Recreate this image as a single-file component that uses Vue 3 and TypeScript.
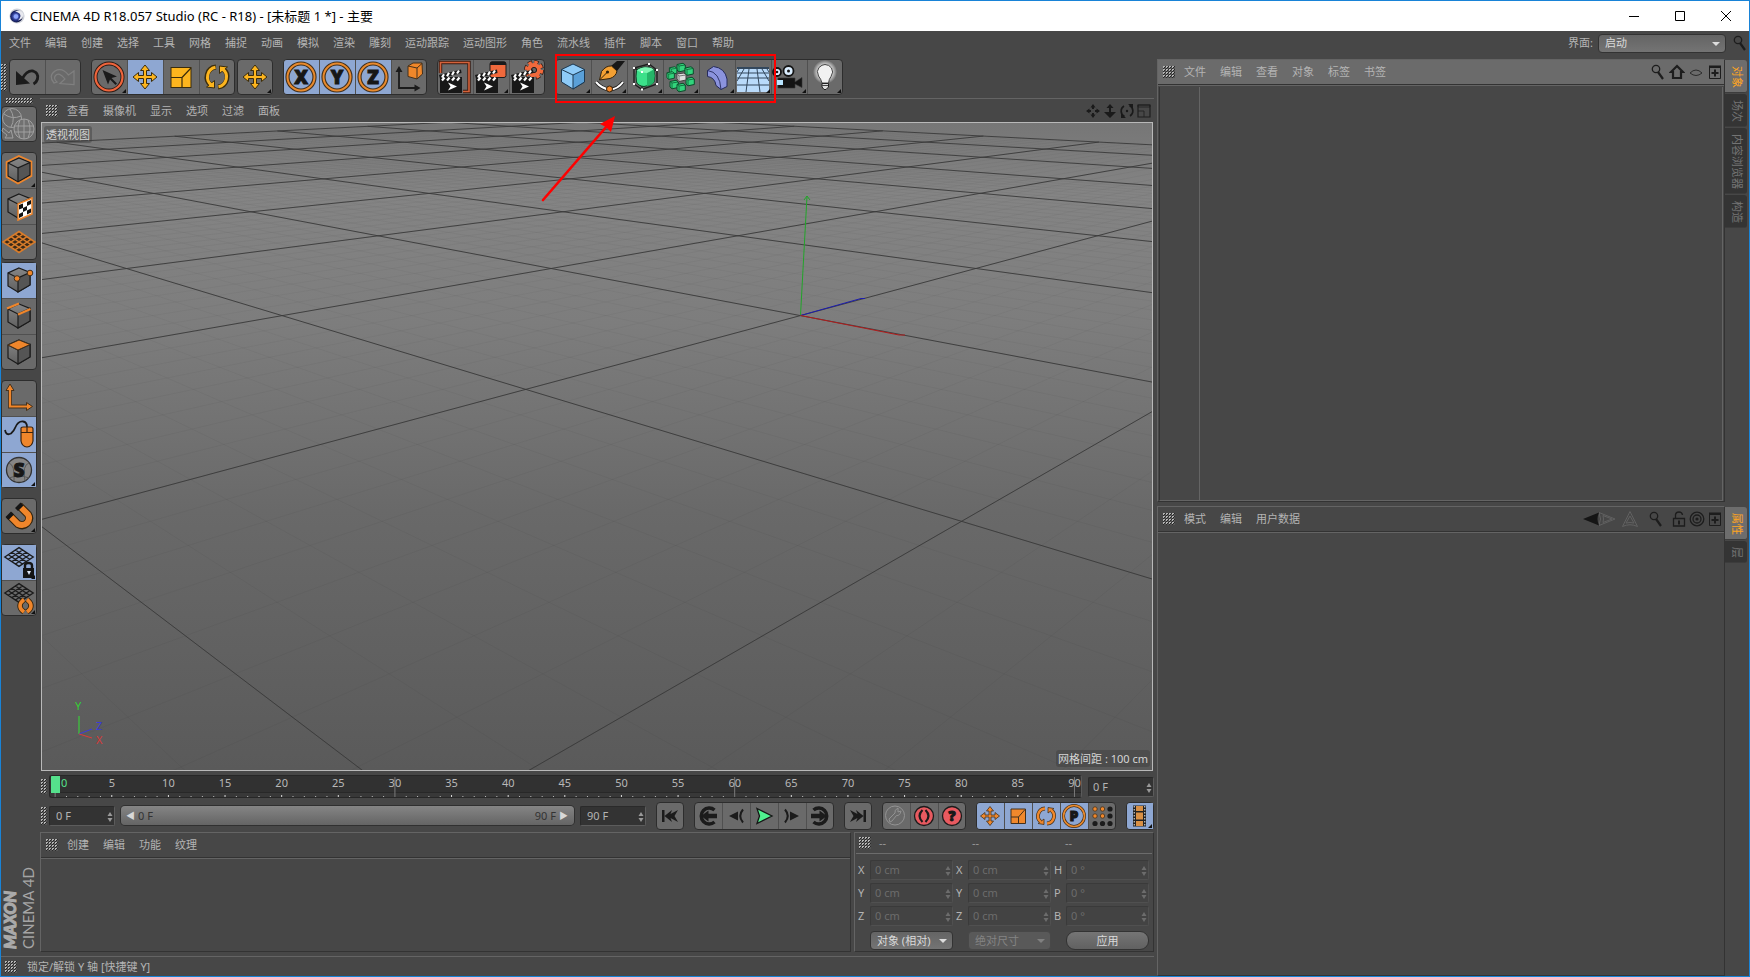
<script setup lang="ts">
import { ref } from 'vue'

interface Tool { icon: string; label: string; on?: boolean; more?: boolean; off?: boolean; glyph?: string }
interface Segment { x1: number; y1: number; x2: number; y2: number }

const mainMenu = ['文件', '编辑', '创建', '选择', '工具', '网格', '捕捉', '动画', '模拟', '渲染', '雕刻', '运动跟踪', '运动图形', '角色', '流水线', '插件', '脚本', '窗口', '帮助']
const viewMenu = ['查看', '摄像机', '显示', '选项', '过滤', '面板']
const materialMenu = ['创建', '编辑', '功能', '纹理']
const objectMenu = ['文件', '编辑', '查看', '对象', '标签', '书签']
const attributeMenu = ['模式', '编辑', '用户数据']

const toolGroups: Tool[][] = [
  [{ icon: 'undo', label: '撤销' }, { icon: 'redo', label: '重做', off: true }],
  [
    { icon: 'cursor', label: '实时选择', more: true },
    { icon: 'move', label: '移动', on: true },
    { icon: 'scale', label: '缩放' },
    { icon: 'rotate', label: '旋转' },
  ],
  [{ icon: 'move', label: '最近使用的工具', more: true }],
  [
    { icon: 'ring', label: 'X 轴', on: true, glyph: 'X' },
    { icon: 'ring', label: 'Y 轴', on: true, glyph: 'Y' },
    { icon: 'ring', label: 'Z 轴', on: true, glyph: 'Z' },
    { icon: 'coords', label: '坐标系统' },
  ],
  [
    { icon: 'render-view', label: '渲染活动视图' },
    { icon: 'render-picture', label: '渲染到图片查看器', more: true },
    { icon: 'render-settings', label: '编辑渲染设置' },
  ],
]
const createTools: Tool[] = [
  { icon: 'cube-blue', label: '立方体', more: true },
  { icon: 'pen', label: '画笔', more: true },
  { icon: 'subdivision', label: '细分曲面', more: true },
  { icon: 'array', label: '阵列', more: true },
  { icon: 'bend', label: '扭曲', more: true },
  { icon: 'floor', label: '地面', more: true },
  { icon: 'camera', label: '摄像机', more: true },
  { icon: 'light', label: '灯光', more: true },
]
const palette: Tool[][] = [
  [{ icon: 'editable', label: '转为可编辑对象', off: true }],
  [
    { icon: 'model', label: '模型', more: true },
    { icon: 'texture', label: '纹理' },
    { icon: 'workplane', label: '工作平面' },
  ],
  [
    { icon: 'points', label: '点', on: true },
    { icon: 'edges', label: '边' },
    { icon: 'polygons', label: '多边形' },
  ],
  [
    { icon: 'axis', label: '启用轴心' },
    { icon: 'tweak', label: '微调', on: true },
    { icon: 'solo', label: '视窗单体独显', on: true, more: true, glyph: 'S' },
  ],
  [{ icon: 'magnet', label: '启用捕捉', more: true }],
  [
    { icon: 'plane-lock', label: '锁定工作平面', on: true, more: true },
    { icon: 'plane-rotate', label: '平直工作平面', more: true },
  ],
]
const playGroups: Tool[][] = [
  [{ icon: 'to-start', label: '转到开始' }],
  [
    { icon: 'prev-key', label: '上一关键帧' },
    { icon: 'prev-frame', label: '上一帧' },
    { icon: 'play', label: '向前播放' },
    { icon: 'next-frame', label: '下一帧' },
    { icon: 'next-key', label: '下一关键帧' },
  ],
  [{ icon: 'to-end', label: '转到结束' }],
  [
    { icon: 'record', label: '记录活动对象', off: true },
    { icon: 'autokey', label: '自动关键帧' },
    { icon: 'keysel', label: '关键帧选集', glyph: '?' },
  ],
  [
    { icon: 'k-move', label: '位置', on: true },
    { icon: 'k-scale', label: '缩放', on: true },
    { icon: 'k-rotate', label: '旋转', on: true },
    { icon: 'k-param', label: '参数', on: true, glyph: 'P' },
    { icon: 'k-points', label: '点级别动画' },
  ],
  [{ icon: 'film', label: '动画预置', on: true, more: true }],
]

const startFrame = ref('0 F')
const endFrame = ref('90 F')
const currentFrame = ref('0 F')
const layout = ref('启动')
const coordMode = ref('对象 (相对)')
const sizeMode = ref('绝对尺寸')

const coordRows = [
  [['X', '0 cm'], ['X', '0 cm'], ['H', '0 °']],
  [['Y', '0 cm'], ['Y', '0 cm'], ['P', '0 °']],
  [['Z', '0 cm'], ['Z', '0 cm'], ['B', '0 °']],
]

const frames = Array.from({ length: 91 }, (_, f) => f)
const frameX = (f: number): string => `${(0.5 + f * 1.0985).toFixed(3)}%`

// Perspective projection of the ground plane onto the viewport.
const depth = (x: number, z: number): number => 1 - 0.2206 * x + 0.2203 * z
function project(x: number, z: number): [number, number] {
  const w = depth(x, z)
  return [(127.7 * x + 390.5 * z + 800.4) / w, (-12.13 * x + 12 * z + 315.6) / w]
}
function groundLine(axis: 'x' | 'z', at: number): Segment | null {
  const near = 0.04
  let from = axis === 'x' ? -10 : -8
  let to = axis === 'x' ? 7 : 12
  if (axis === 'x') from = Math.max(from, (near - 1 + 0.2206 * at) / 0.2203)
  else to = Math.min(to, (1 + 0.2203 * at - near) / 0.2206)
  if (from >= to) return null
  const a = axis === 'x' ? project(at, from) : project(from, at)
  const b = axis === 'x' ? project(at, to) : project(to, at)
  return { x1: a[0], y1: a[1], x2: b[0], y2: b[1] }
}
function groundLines(step: number, xs: [number, number], zs: [number, number]): Segment[] {
  const out: Segment[] = []
  for (let i = xs[0] / step; i <= xs[1] / step; i++) {
    const s = groundLine('x', i * step)
    if (s) out.push(s)
  }
  for (let i = zs[0] / step; i <= zs[1] / step; i++) {
    const s = groundLine('z', i * step)
    if (s) out.push(s)
  }
  return out
}
const majorLines = groundLines(1, [-8, 6], [-4, 7])
const minorLines = groundLines(0.125, [-5, 3], [-3, 4])
</script>

<template>
  <div class="window">
    <svg class="defs" width="0" height="0" aria-hidden="true">
      <defs>
        <linearGradient id="g-cube" x1="0" y1="0" x2="0" y2="1"><stop offset="0" stop-color="#868686" /><stop offset="1" stop-color="#606060" /></linearGradient>
        <radialGradient id="g-logo" cx=".45" cy=".5" r=".6"><stop offset="0" stop-color="#9fb4ff" /><stop offset=".5" stop-color="#26348c" /><stop offset="1" stop-color="#05081f" /></radialGradient>
        <radialGradient id="g-glow"><stop offset=".5" stop-color="#e6e6e6" /><stop offset="1" stop-color="#fff" stop-opacity="0" /></radialGradient>
      </defs>
      <symbol id="i-logo" viewBox="0 0 18 18">
        <circle cx="9" cy="9" r="7.6" fill="#cfd2da" />
        <circle cx="8.4" cy="9.4" r="6.2" fill="url(#g-logo)" />
        <path d="M7 4.5Q13 2 15.5 7Q15.5 12 10 13.5Q14 9 11.5 6.5Q9.5 5 7 4.5Z" fill="#e8e9ef" />
        <circle cx="8" cy="9.5" r="2.2" fill="#8fa6ff" />
      </symbol>
      <symbol id="i-undo" viewBox="0 0 36 36">
        <path d="M13 20Q18 11 24 12Q30 14 28.5 20Q27.5 23.5 24.5 25" fill="none" stroke="#1c1c1c" stroke-width="2.8" />
        <path d="M7 12V26L21 24.5Z" fill="#1c1c1c" />
      </symbol>
      <symbol id="i-redo" viewBox="0 0 36 36">
        <path d="M9 24Q3 17 10 12Q17 8 23.500 16L29 12V25.5L15 24.500L20 20Q14 12.500 10.500 16.500Q8 19.500 12 23Z" fill="none" stroke="#808080" stroke-width="1.200" />
      </symbol>
      <symbol id="i-cursor" viewBox="0 0 36 36">
        <circle cx="18" cy="18" r="13.5" fill="none" stroke="#2a1a14" stroke-width="4" />
        <circle cx="18" cy="18" r="13.5" fill="none" stroke="#f0653c" stroke-width="2.2" />
        <path d="M11.5 11L26 17.5L20.5 19L26 24.5L24.5 26L19 20.5L17 25.5Z" fill="#1b1b1b" />
      </symbol>
      <symbol id="i-move" viewBox="0 0 36 36">
        <path d="M18 6L22.5 11.5H19.5V16.5H24.500V13.500L30 18L24.500 22.500V19.500H19.500V24.500H22.500L18 30L13.500 24.500H16.500V19.500H11.500V22.500L6 18L11.500 13.500V16.500H16.500V11.500H13.500Z" fill="#fdb51e" stroke="#3a2c0c" />
      </symbol>
      <symbol id="i-scale" viewBox="0 0 36 36">
        <rect x="8" y="8.5" width="20" height="20" fill="#fdb51e" stroke="#3a2c0c" />
        <path d="M8 18.5H19V28.5M19 18.5L28 9" fill="none" stroke="#3a2c0c" stroke-width="1.2" />
      </symbol>
      <symbol id="i-rotate" viewBox="0 0 36 36">
        <path d="M12 26A10 10 0 0 1 17 8M24 10A10 10 0 0 1 19 28" fill="none" stroke="#3a2c0c" stroke-width="4.8" />
        <path d="M7.5 28L15.500 29V21.500ZM28.500 8L20.500 7V14.500Z" fill="#fdb51e" stroke="#3a2c0c" />
        <path d="M12.500 26A10 10 0 0 1 16.500 8.200M23.500 10A10 10 0 0 1 19.500 27.800" fill="none" stroke="#fdb51e" stroke-width="3" />
      </symbol>
      <symbol id="i-ring" viewBox="0 0 36 36">
        <circle cx="18" cy="18" r="13.5" fill="none" stroke="#43301c" stroke-width="4.2" />
        <circle cx="18" cy="18" r="13.5" fill="none" stroke="#e98a2d" stroke-width="2" />
      </symbol>
      <symbol id="i-coords" viewBox="0 0 36 36">
        <path d="M8 11V29H25" fill="none" stroke="#1b1b1b" stroke-width="1.8" />
        <path d="M8 7L11.5 13H4.5ZM29.5 29L23.5 25.5V32.5Z" fill="#1b1b1b" />
        <path d="M17 7L22 4H31L31.5 15L26 20L17 17.5Z" fill="#f0872a" stroke="#43301c" />
        <path d="M17 7L26 9V20M26 9L31 4.5" fill="none" stroke="#43301c" />
      </symbol>
      <symbol id="i-clapper" viewBox="0 0 36 36">
        <path d="M3 21H25V34H3Z" fill="#181818" />
        <path d="M2 16L24 10.5L24.5 14L3 19.5ZM3 18H25V22H3Z" fill="#181818" />
        <path d="M5 18.5L7 15.2M10 17.2L12 13.8M15 16L17 12.5M20 14.5L22 11.5M5 21.5L7.500 18.500M10 21.500L12.500 18.500M15 21.500L17.500 18.500M20 21.500L22.500 18.500" stroke="#fff" stroke-width="2.200" />
        <path d="M11 23.500L20 27.500L11 31.500L13.500 27.500Z" fill="#fff" />
      </symbol>
      <symbol id="i-render-view" viewBox="0 0 36 36">
        <path d="M3.5 14V3.5H32V32.5H26" fill="none" stroke="#3a1b10" stroke-width="3.4" />
        <path d="M3.5 14V3.5H32V32.5H26" fill="none" stroke="#d5623a" stroke-width="1.6" />
        <use href="#i-clapper" />
      </symbol>
      <symbol id="i-render-picture" viewBox="0 0 36 36">
        <rect x="17" y="3" width="16" height="15.5" rx="2" fill="#f0693c" stroke="#1b1b1b" />
        <path d="M17 6V4.5Q17 2.5 19 2.5H31Q33 2.5 33 4.5V6Z" fill="#1b1b1b" />
        <use href="#i-clapper" />
      </symbol>
      <symbol id="i-render-settings" viewBox="0 0 36 36">
        <circle cx="25" cy="11" r="7.5" fill="none" stroke="#2a1a14" stroke-width="5" stroke-dasharray="3.9 2" />
        <circle cx="25" cy="11" r="7" fill="none" stroke="#f0693c" stroke-width="4.5" stroke-dasharray="3.2 2.3" />
        <circle cx="25" cy="11" r="4.9" fill="none" stroke="#f0693c" stroke-width="4.2" />
        <circle cx="25" cy="11" r="2.6" fill="#666" stroke="#2a1a14" />
        <use href="#i-clapper" />
      </symbol>
      <symbol id="i-cube-blue" viewBox="0 0 36 36">
        <path d="M18 5L29.5 10.5V23L18 30L6.5 23V10.5Z" fill="#8ecbf8" stroke="#1c3850" />
        <path d="M29.5 10.5V23L18 30V16Z" fill="#5aa0d8" stroke="#1c3850" />
        <path d="M6.5 10.5L18 16" stroke="#1c3850" />
      </symbol>
      <symbol id="i-pen" viewBox="0 0 36 36">
        <path d="M20 7L26 2H34L26 12Z" fill="#171717" />
        <path d="M8.5 21L10.5 12.500Q15 6.500 20.500 7L26 12Q25 17.500 19 19.500Z" fill="#f3a033" stroke="#33230d" />
        <path d="M8.500 21L16 13.500" stroke="#33230d" /><circle cx="16.500" cy="13" r="1.600" fill="#33230d" />
        <path d="M5 23Q11 30 19 30.500Q27 30 32 23" fill="none" stroke="#222" stroke-width="3.800" />
        <path d="M5 23Q11 30 19 30.500Q27 30 32 23" fill="none" stroke="#fff" stroke-width="2" />
        <circle cx="18.500" cy="30" r="3" fill="#f3862a" stroke="#33230d" />
      </symbol>
      <symbol id="i-subdivision" viewBox="0 0 36 36">
        <path d="M7 9L22 5L30 11V25L15 30.500L7 25ZM7 9L15 13L30 11M15 13V30M22 5V9" fill="none" stroke="#1f1f1f" stroke-width="1.400" />
        <path d="M9.500 11.500Q10 9.500 17 8Q24 7.500 27 10.500Q28.500 17 27 23Q24 27 17 27.500Q11 27 9.500 23Q8.500 17 9.500 11.500Z" fill="#3be08a" stroke="#0d3e24" />
        <path d="M27 10.500Q28.500 17 27 23Q25 26 20 27V14Z" fill="#24b468" />
        <path d="M10 11.500Q12 9 18 8.200Q24 8 26.500 10.500L20 14Q14 14 10 11.500Z" fill="#7df5b2" />
        <path d="M6 8h2v2H6zM21 4h2v2h-2zM29 10h2v2h-2zM29 24h2v2h-2zM14 29.500h2v2h-2zM6 24h2v2H6zM14 12h2v2h-2z" fill="#fff" />
      </symbol>
      <symbol id="i-nub" viewBox="0 0 10 10"><path d="M1 2L7 .8L9.300 2.500V8L3 9.300L1 7.500Z" fill="#32d47c" stroke="#0c4a2a" /><path d="M1 2L3 3.500L9 2.500M3 3.500V9" fill="none" stroke="#0c5a32" stroke-width=".8" /></symbol>
      <symbol id="i-array" viewBox="0 0 36 36">
        <use href="#i-nub" x="13" y="3" width="10" height="11" /><use href="#i-nub" x="21" y="7" width="10" height="10" />
        <use href="#i-nub" x="5" y="7" width="10" height="9" /><use href="#i-nub" x="3" y="12" width="9" height="9" />
        <use href="#i-nub" x="22" y="17" width="10" height="11" /><use href="#i-nub" x="6" y="20" width="10" height="11" />
        <use href="#i-nub" x="13" y="23" width="10" height="11" />
        <path d="M14 15L21 14L23 16V21L16 22.500L14 20Z" fill="#dedede" stroke="#444" /><path d="M14 15L16 17L23 16M16 17V22" fill="none" stroke="#777" />
      </symbol>
      <symbol id="i-bend" viewBox="0 0 36 36">
        <path d="M8.500 11.500L14.500 7.500Q26 9 28 20V27.500L22 30.500L17 26.500Q16 18.500 8.500 17.500Z" fill="#8b93dd" stroke="#262b5c" />
        <path d="M8.500 11.500Q21 13 22 30.500" fill="none" stroke="#262b5c" stroke-width=".9" />
      </symbol>
      <symbol id="i-floor" viewBox="0 0 36 36">
        <path d="M2 8H34V33H2Z" fill="#b9dafa" /><path d="M2 8H34V10H2Z" fill="#33475c" />
        <path d="M2 14H34M2 19H34M2 26H34M14 10L11 33M22 10L25 33M9 10L2 22M27 10L34 22M4 10L2 13M32 10L34 13" stroke="#33475c" fill="none" />
      </symbol>
      <symbol id="i-camera" viewBox="0 0 36 36">
        <path d="M7 19H24V23L31 18.5V28.5L24 25V29H7Z" fill="#141414" stroke="#333" stroke-width=".6" />
        <circle cx="6" cy="13" r="4" fill="#dbeeff" stroke="#141414" stroke-width="1.8" /><circle cx="17.5" cy="12" r="5" fill="#dbeeff" stroke="#141414" stroke-width="1.8" />
        <circle cx="6" cy="13" r="1.3" fill="#141414" /><circle cx="17.5" cy="12" r="1.5" fill="#141414" /><rect x="6" y="21" width="6" height="5" fill="#b8e4ff" />
      </symbol>
      <symbol id="i-light" viewBox="0 0 36 36">
        <circle cx="18" cy="13" r="12" fill="url(#g-glow)" />
        <path d="M15 24Q14 20 11.5 17Q9 12 12 8.500Q15 5.500 18 5.500Q22 5.500 24.500 9Q27 13 24 17.500Q22 20 21.500 24Z" fill="#f2f2f2" stroke="#444" />
        <path d="M15 24.500H21.500V28L19 30.500H17L15 28Z" fill="#ddd" stroke="#222" /><path d="M15 26.500H21" stroke="#444" />
      </symbol>
      <symbol id="i-editable" viewBox="0 0 36 36">
        <g fill="none" stroke="#a0a0a0">
          <circle cx="11" cy="12" r="9.5" /><path d="M3 8Q11 14 20 10M9 3Q15 12 10 21" />
          <circle cx="23" cy="23" r="10" fill="#717171" /><path d="M13 20H33M13.5 26H32.5M19 14Q15 23 19 32M27 14Q31 23 27 32M23 13V33" />
          <path d="M2 22L8 27L10 24L12 32L4 32L6 29L1 25Z" fill="#6c6c6c" />
        </g>
      </symbol>
      <symbol id="i-cube" viewBox="0 0 36 36">
        <path d="M18 6L29 10.5V23L17 30L7 24V11Z" fill="url(#g-cube)" stroke="#1b1b1b" stroke-width="1.2" />
        <path d="M29 10.5V23L17 30V16Z" fill="#555" stroke="#1b1b1b" stroke-width="1.2" />
        <path d="M7 11L17 16" stroke="#1b1b1b" stroke-width="1.2" />
      </symbol>
      <symbol id="i-model" viewBox="0 0 36 36"><use href="#i-cube" /><path d="M18 4L30.5 9.5V24L17 31.5L5.5 25V10Z" fill="none" stroke="#f0862b" stroke-width="1.6" /></symbol>
      <symbol id="i-texture" viewBox="0 0 36 36">
        <use href="#i-cube" /><path d="M17 16L31 10V26L17 32Z" fill="#fff" stroke="#f0862b" stroke-width="1.5" />
        <path d="M18 17L22 15.5V20L18 21.500ZM26 14L30 12V16L26 18ZM22 20L26 18V22L22 24ZM18 26L22 24V28L18 30ZM26 22.500L30 20.500V24.500L26 26.500Z" fill="#111" />
      </symbol>
      <symbol id="i-mesh" viewBox="0 0 36 36">
        <path d="M2 18L18 7.5L34 18L18 28.5ZM6 15.4L22 25.9M10 12.7L26 23.2M14 10.1L30 20.6M6 20.6L22 10.1M10 23.2L26 12.7M14 25.9L30 15.4" fill="none" stroke-width="1.5" />
      </symbol>
      <symbol id="i-workplane" viewBox="0 0 36 36"><path d="M2 18L18 7.5L34 18L18 28.5Z" fill="#3b2a18" /><use href="#i-mesh" stroke="#d97c2a" /></symbol>
      <symbol id="i-points" viewBox="0 0 36 36"><use href="#i-cube" /><circle cx="16" cy="16.5" r="2.8" fill="#f0862b" stroke="#43301c" /><circle cx="29" cy="11" r="2.8" fill="#f0862b" stroke="#43301c" /></symbol>
      <symbol id="i-edges" viewBox="0 0 36 36"><use href="#i-cube" /><path d="M6 10.5L18 5.5M17 16.5L29.5 11" stroke="#f0862b" stroke-width="2.2" /></symbol>
      <symbol id="i-polygons" viewBox="0 0 36 36"><use href="#i-cube" /><path d="M18 6L29 10.5L17 16L7 11Z" fill="#f0862b" stroke="#43301c" /></symbol>
      <symbol id="i-axis" viewBox="0 0 36 36">
        <path d="M9 9V26.5H28" fill="none" stroke="#43301c" stroke-width="3.8" /><path d="M9 4L13 10.5H5ZM31.5 26.5L25.5 22.5V30.5Z" fill="#f0862b" stroke="#43301c" />
        <path d="M9 9V26.5H28" fill="none" stroke="#f0862b" stroke-width="2.2" />
      </symbol>
      <symbol id="i-tweak" viewBox="0 0 36 36">
        <path d="M4 14Q5 20 10 17.5Q13 15 14 12Q17 5 22 5.5Q26 6 26 11" fill="none" stroke="#1b1b1b" stroke-width="1.8" />
        <path d="M20 12Q20 11 22 11H30Q32 11 32 13V25Q31 30.5 26 31Q21 30.5 20 25Z" fill="#f0862b" stroke="#3b2410" stroke-width="1.2" /><path d="M20 16.5H32M26 11V16.5" stroke="#3b2410" stroke-width="1.2" />
      </symbol>
      <symbol id="i-solo" viewBox="0 0 36 36">
        <circle cx="18" cy="18" r="12.5" fill="#858585" stroke="#333" stroke-width="1.3" /><path d="M8 11Q14 13 13 29M28 11Q21 13 24 29M8 26Q18 22 28 26" fill="none" stroke="#5a5a5a" />
      </symbol>
      <symbol id="i-magnet" viewBox="0 0 36 36">
        <path d="M8 17L17 26Q22 29 26 25Q30 21 27 16.5L18 7.5" fill="none" stroke="#33230d" stroke-width="8" />
        <path d="M9 18L17 26Q22 28.5 26 25Q29.5 21 27 16.500L19 8.500" fill="none" stroke="#f0862b" stroke-width="6" />
        <path d="M4.500 19L10 13.500L13 16.500L7.500 22ZM14 10L19.500 4.500L22.500 7.500L17 13Z" fill="#151515" />
      </symbol>
      <symbol id="i-plane-lock" viewBox="0 0 36 36">
        <use href="#i-mesh" stroke="#1b1b1b" x="2" y="-3" width="32" height="32" />
        <path d="M24 25V21.5Q24 19 27.5 19Q31 19 31 21.5V25" fill="none" stroke="#151515" stroke-width="2.4" /><path d="M22 24H33V34H22Z" fill="#151515" /><path d="M26 27H30L28 31Z" fill="#dfe7f7" />
      </symbol>
      <symbol id="i-plane-rotate" viewBox="0 0 36 36">
        <use href="#i-mesh" stroke="#1b1b1b" x="2" y="-3" width="32" height="32" />
        <path d="M23 32Q15 26 23 19.5M26 32Q34 26 26 19.5" fill="none" stroke="#33230d" stroke-width="5.4" /><path d="M23 32Q15 26 23 19.5M26 32Q34 26 26 19.5" fill="none" stroke="#f0862b" stroke-width="3.6" />
      </symbol>
      <symbol id="i-to-start" viewBox="0 0 28 28"><path d="M6 8h2.5v12H6zM8.500 14L16 8L14.500 12L22 8L18.500 14L22 20L14.500 16L16 20Z" fill="#1b1b1b" /></symbol>
      <symbol id="i-to-end" viewBox="0 0 28 28"><path d="M22 8h-2.5v12H22zM19.500 14L12 8L13.500 12L6 8L9.500 14L6 20L13.500 16L12 20Z" fill="#1b1b1b" /></symbol>
      <symbol id="i-prev-key" viewBox="0 0 28 28"><path d="M20.500 8A8 8 0 1 0 20.500 20" fill="none" stroke="#1b1b1b" stroke-width="3.400" /><path d="M7 14L14.500 8.500V11.800H23V16.200H14.500V19.500Z" fill="#1b1b1b" /></symbol>
      <symbol id="i-next-key" viewBox="0 0 28 28"><path d="M7.500 8A8 8 0 1 1 7.500 20" fill="none" stroke="#1b1b1b" stroke-width="3.400" /><path d="M21 14L13.500 8.500V11.800H5V16.200H13.500V19.500Z" fill="#1b1b1b" /></symbol>
      <symbol id="i-prev-frame" viewBox="0 0 28 28"><path d="M7 14L16 9.5V18.500Z" fill="#1b1b1b" /><path d="M21 7.500Q15.500 14 21 20.500" fill="none" stroke="#1b1b1b" stroke-width="2" /></symbol>
      <symbol id="i-next-frame" viewBox="0 0 28 28"><path d="M21 14L12 9.5V18.500Z" fill="#1b1b1b" /><path d="M7 7.500Q12.500 14 7 20.500" fill="none" stroke="#1b1b1b" stroke-width="2" /></symbol>
      <symbol id="i-play" viewBox="0 0 28 28"><path d="M7 6.5L22 14L7 21.5L9.5 14Z" fill="#4ff08e" stroke="#161616" stroke-width="1.3" /></symbol>
      <symbol id="i-record" viewBox="0 0 28 28"><circle cx="13" cy="13.5" r="9.5" fill="none" stroke="#939393" /><path d="M8 20L7 17L13 11Q12 8 16 6V10L19 9Q18 14 14.5 13.5L10 19Z" fill="none" stroke="#939393" /></symbol>
      <symbol id="i-autokey" viewBox="0 0 28 28"><circle cx="14" cy="14" r="9.5" fill="#e85a60" stroke="#1b1b1b" stroke-width="1.3" /><path d="M12.5 8Q6.5 14 12.500 20M15.500 8Q21.500 14 15.500 20" fill="none" stroke="#1b1b1b" stroke-width="2.200" /></symbol>
      <symbol id="i-keysel" viewBox="0 0 28 28"><circle cx="14" cy="14" r="9.5" fill="#e85a60" stroke="#1b1b1b" stroke-width="1.3" /></symbol>
      <symbol id="i-k-move" viewBox="0 0 28 28"><path d="M14 4.5L17.5 9H15V13H19V10.5L23.5 14L19 17.5V15H15V19H17.5L14 23.5L10.5 19H13V15H9V17.500L4.500 14L9 10.500V13H13V9H10.500Z" fill="#f0882c" stroke="#43301c" stroke-width=".8" /></symbol>
      <symbol id="i-k-scale" viewBox="0 0 28 28"><path d="M7 7H21.5V21.5H7Z" fill="#f0882c" stroke="#43301c" /><path d="M7 15H14.5V21.5M14.5 15L21 7.5" stroke="#43301c" fill="none" /></symbol>
      <symbol id="i-k-rotate" viewBox="0 0 28 28">
        <path d="M9 20A7.5 7.5 0 0 1 13 6.500M19 8A7.500 7.500 0 0 1 15 21.500" fill="none" stroke="#43301c" stroke-width="3.800" /><path d="M6 21.500L12 22.500V17ZM22 6.500L16 5.500V11Z" fill="#f0882c" stroke="#43301c" stroke-width=".8" /><path d="M9 20A7.500 7.500 0 0 1 13 6.500M19 8A7.500 7.500 0 0 1 15 21.500" fill="none" stroke="#f0882c" stroke-width="2.400" />
      </symbol>
      <symbol id="i-k-param" viewBox="0 0 28 28"><circle cx="14" cy="14" r="10.5" fill="none" stroke="#43301c" stroke-width="3" /><circle cx="14" cy="14" r="10.5" fill="none" stroke="#e98a2d" stroke-width="1.6" /></symbol>
      <symbol id="i-k-points" viewBox="0 0 28 28">
        <g fill="#f0882c" stroke="#43301c" stroke-width=".8"><circle cx="7" cy="7" r="2.2" /><circle cx="14.5" cy="7" r="2.2" /><circle cx="7" cy="14" r="2.2" /><circle cx="14.5" cy="14" r="2.2" /></g>
        <g fill="#1b1b1b"><circle cx="22" cy="7" r="2.6" /><circle cx="22" cy="14" r="2.6" /><circle cx="7" cy="21.5" r="2.6" /><circle cx="14.5" cy="21.5" r="2.6" /><circle cx="22" cy="21.5" r="2.6" /></g>
      </symbol>
      <symbol id="i-film" viewBox="0 0 28 28"><path d="M7 3.5H20V24.5H7Z" fill="#222" /><path d="M10 4H17V9H10zM10 10.5H17V17.5H10zM10 19H17V24H10z" fill="#d99045" /><path d="M8.3 4V25M18.7 4V25" stroke="#bbb" stroke-width="1.3" stroke-dasharray="1.5 1.5" /></symbol>
      <symbol id="i-search" viewBox="0 0 16 16"><circle cx="6" cy="5" r="3.7" fill="none" stroke="#1d1d1d" stroke-width="1.3" /><path d="M8 8L13 15" stroke="#1d1d1d" stroke-width="2.2" /></symbol>
      <symbol id="i-home" viewBox="0 0 16 16"><path d="M8 2L14 8H12V14H4V8H2Z" fill="none" stroke="#1d1d1d" stroke-width="2.2" /></symbol>
      <symbol id="i-eye" viewBox="0 0 16 16"><path d="M2 9Q8 3 14 9Q8 14 2 9Z" fill="none" stroke="#2b2b2b" /></symbol>
      <symbol id="i-plus" viewBox="0 0 16 16"><path d="M2.5 2V14.5H13.5V2" fill="none" stroke="#1d1d1d" /><path d="M2 1.5H14V4H2ZM7 5.500H9V8H11.500V10H9V12.500H7V10H4.500V8H7Z" fill="#1d1d1d" /></symbol>
      <symbol id="i-back" viewBox="0 0 16 16"><path d="M0 8L16 1.5Q13 8 16 14.5Z" fill="#151515" /></symbol>
      <symbol id="i-forward" viewBox="0 0 16 16"><path d="M16 8L0 1.5Q3 8 0 14.5ZM13 8L4 4.500Q5 8 4 11.500Z" fill="none" stroke="#616161" /></symbol>
      <symbol id="i-up" viewBox="0 0 16 16"><path d="M8 .5L15.5 15.5Q8 12 .5 15.5ZM8 5L12 12Q8 11 4 12Z" fill="none" stroke="#616161" /></symbol>
      <symbol id="i-unlock" viewBox="0 0 16 16"><path d="M2.5 7.5H13.5V15H2.5ZM4.5 7.5V3.5Q5 1 8 1Q11 1 11.5 4" fill="none" stroke="#1d1d1d" stroke-width="1.3" /><path d="M7 9.5h2v4H7z" fill="#1d1d1d" /></symbol>
      <symbol id="i-target" viewBox="0 0 16 16"><g fill="none" stroke="#1d1d1d" stroke-width="1.3"><circle cx="8" cy="8" r="6.8" /><circle cx="8" cy="8" r="4" /></g><circle cx="8" cy="8" r="1.6" fill="#1d1d1d" /></symbol>
      <symbol id="i-v-pan" viewBox="0 0 16 16"><path d="M8 1L10.5 4.5H9V6H7V4.5H5.5ZM8 15L10.500 11.500H9V10H7V11.500H5.500ZM1 8L4.500 5.500V7H6V9H4.500V10.500ZM15 8L11.500 5.500V7H10V9H11.500V10.500Z" fill="#1a1a1a" /></symbol>
      <symbol id="i-v-zoom" viewBox="0 0 16 16"><path d="M8 1L11.5 5H9V9H14L8 15L2 9H7V5H4.5Z" fill="#1a1a1a" /></symbol>
      <symbol id="i-v-rotate" viewBox="0 0 16 16"><path d="M5.5 13.5A6 6 0 0 1 5 3M10.5 2.5A6 6 0 0 1 11 13" fill="none" stroke="#1a1a1a" stroke-width="1.6" /><path d="M9 1H14V5.5ZM7 15H2V10.5Z" fill="#1a1a1a" /><circle cx="8" cy="8" r="1.2" fill="#1a1a1a" /></symbol>
      <symbol id="i-v-max" viewBox="0 0 16 16"><path d="M2 2H14V14H2Z" fill="none" stroke="#1f1f1f" stroke-width="1.2" /><path d="M2 2H14V4H2ZM2 8H8V14" fill="none" stroke="#1f1f1f" stroke-width=".8" /></symbol>
      <symbol id="i-spin" viewBox="0 0 6 10"><path d="M3 0L5.5 4H.5ZM3 10L5.5 6H.5Z" fill="currentColor" /></symbol>
      <symbol id="i-down" viewBox="0 0 8 4"><path d="M0 0H8L4 4Z" fill="currentColor" /></symbol>
    </svg>

    <header class="titlebar">
      <svg class="app-icon"><use href="#i-logo" /></svg>
      <h1 class="app-title">CINEMA 4D R18.057 Studio (RC - R18) - [未标题 1 *] - 主要</h1>
      <button class="win-btn" aria-label="最小化"><svg viewBox="0 0 10 10"><path d="M0 5.5H10" /></svg></button>
      <button class="win-btn" aria-label="最大化"><svg viewBox="0 0 10 10"><path d="M.5 .5H9.5V9.5H.5Z" /></svg></button>
      <button class="win-btn" aria-label="关闭"><svg viewBox="0 0 10 10"><path d="M0 0L10 10M10 0L0 10" /></svg></button>
    </header>

    <nav class="menubar">
      <div class="menu"><button v-for="m in mainMenu" :key="m">{{ m }}</button></div>
      <label class="layout-label" for="layout">界面:</label>
      <span class="select layout-select">
        <select id="layout" v-model="layout"><option>启动</option></select>
        <svg><use href="#i-down" /></svg>
      </span>
      <button class="mini" aria-label="搜索"><svg><use href="#i-search" /></svg></button>
    </nav>

    <main class="workspace">
      <section class="left">
        <div class="toolbar">
          <span class="grip grip-tall"></span>
          <div v-for="(g, gi) in toolGroups" :key="gi" class="group" :class="'tg-' + gi">
            <button v-for="t in g" :key="t.label" class="tool" :class="{ on: t.on, more: t.more }" :disabled="t.off" :aria-label="t.label">
              <svg><use :href="'#i-' + t.icon" /><text v-if="t.glyph" x="18" y="25" class="glyph">{{ t.glyph }}</text></svg>
            </button>
          </div>
          <div class="group create">
            <button v-for="t in createTools" :key="t.icon" class="tool" :class="{ more: t.more }" :aria-label="t.label"><svg><use :href="'#i-' + t.icon" /></svg></button>
            <svg class="annotation" viewBox="0 0 250 160">
              <rect x="21" y="4" width="219" height="47" fill="none" stroke="#f00" stroke-width="2" />
              <path d="M8 149L72 75" stroke="#f00" stroke-width="2.6" stroke-linecap="round" />
              <path d="M80 65L76 81L71 76L65 73Z" fill="#f00" />
            </svg>
          </div>
        </div>

        <div class="center">
          <aside class="palette">
            <span class="grip grip-wide"></span>
            <div v-for="(g, gi) in palette" :key="gi" class="group vertical" :class="'pg-' + gi">
              <button v-for="t in g" :key="t.icon" class="tool" :class="{ on: t.on, more: t.more }" :disabled="t.off" :aria-label="t.label">
                <svg><use :href="'#i-' + t.icon" /><text v-if="t.glyph" x="18" y="25" class="glyph">{{ t.glyph }}</text></svg>
              </button>
            </div>
            <svg class="maxon-logo" viewBox="0 0 36 88">
              <g transform="rotate(-90)"><text x="-86" y="15" class="maxon">MAXON</text><text x="-86" y="33" class="cinema">CINEMA 4D</text></g>
            </svg>
          </aside>

          <div class="stage">
            <div class="panel-head view-head">
              <span class="grip"></span>
              <div class="menu"><button v-for="m in viewMenu" :key="m">{{ m }}</button></div>
              <div class="icons tight">
                <button v-for="i in ['v-pan', 'v-zoom', 'v-rotate', 'v-max']" :key="i" class="mini" :aria-label="i"><svg><use :href="'#i-' + i" /></svg></button>
              </div>
            </div>
            <div class="viewport">
              <svg class="scene" viewBox="42 123 1110 647" preserveAspectRatio="xMidYMid slice">
                <g stroke="#000" stroke-opacity=".035"><line v-for="(l, i) in minorLines" :key="i" v-bind="l" /></g>
                <g stroke="#3a3a3a" stroke-opacity=".9"><line v-for="(l, i) in majorLines" :key="i" v-bind="l" /></g>
                <g fill="none">
                  <path d="M800.5 315.5L807 196M804 200L807 196L810 200" stroke="#22a52a" />
                  <path d="M800.5 315.5L861 298.5H865" stroke="#1c1cae" />
                  <path d="M800.5 315.5L899 335H905" stroke="#b01c1c" />
                </g>
              </svg>
              <span class="tag tag-view">透视视图</span>
              <span class="tag tag-grid">网格间距 : 100 cm</span>
              <svg class="gizmo" viewBox="0 0 40 52">
                <path d="M10 20V38" stroke="#35e035" /><path d="M10 38L23 33" stroke="#3a3ae0" /><path d="M10 38L23 42" stroke="#e03a3a" />
                <text x="6" y="14" fill="#35d035">Y</text><text x="27" y="34" fill="#3a3ad8">Z</text><text x="27" y="48" fill="#d83a3a">X</text>
              </svg>
            </div>

            <div class="timeline">
              <span class="grip grip-slim"></span>
              <svg class="ruler">
                <rect x="1" y="0" width="9" height="17" fill="#55e08c" />
                <line v-for="f in frames" :key="f" :x1="frameX(f)" :x2="frameX(f)" :y1="f % 30 === 0 ? (f ? 1 : 17) : f % 5 ? 20 : 19" y2="22" :stroke="f % 5 ? '#bbb' : f % 30 ? '#ddd' : '#7a7a7a'" />
                <text v-for="n in 18" :key="n" :x="frameX(n * 5)" y="11" text-anchor="middle">{{ n * 5 }}</text>
                <text x="11" y="11" class="current">0</text>
              </svg>
              <label class="num frame-now"><input v-model="currentFrame" aria-label="当前帧" /><svg><use href="#i-spin" /></svg></label>
            </div>

            <div class="transport">
              <span class="grip grip-slim"></span>
              <label class="num"><input v-model="startFrame" aria-label="起始帧" /><svg><use href="#i-spin" /></svg></label>
              <div class="range">
                <button aria-label="范围起点">◀</button><span>0 F</span>
                <span class="range-end">90 F</span><button aria-label="范围终点">▶</button>
              </div>
              <label class="num"><input v-model="endFrame" aria-label="结束帧" /><svg><use href="#i-spin" /></svg></label>
              <div v-for="(g, gi) in playGroups" :key="gi" class="group small">
                <button v-for="t in g" :key="t.icon" class="tool" :class="{ on: t.on, more: t.more }" :disabled="t.off" :aria-label="t.label">
                  <svg><use :href="'#i-' + t.icon" /><text v-if="t.glyph" x="14" y="19" class="glyph">{{ t.glyph }}</text></svg>
                </button>
              </div>
            </div>

            <div class="managers">
              <section class="panel materials">
                <div class="panel-head"><span class="grip"></span><div class="menu"><button v-for="m in materialMenu" :key="m">{{ m }}</button></div></div>
                <div class="material-body"></div>
              </section>
              <section class="panel coords">
                <div class="panel-head coord-head"><span class="grip"></span><span>--</span><span>--</span><span>--</span></div>
                <form class="coord-grid" @submit.prevent>
                  <template v-for="(row, r) in coordRows" :key="r">
                    <template v-for="(c, k) in row" :key="k">
                      <label :for="`c${r}${k}`">{{ c[0] }}</label>
                      <span class="num dim"><input :id="`c${r}${k}`" :value="c[1]" disabled /><svg><use href="#i-spin" /></svg></span>
                    </template>
                  </template>
                  <span class="select c2"><select v-model="coordMode" aria-label="坐标模式"><option>对象 (相对)</option></select><svg><use href="#i-down" /></svg></span>
                  <span class="select c4 dim"><select v-model="sizeMode" aria-label="尺寸模式" disabled><option>绝对尺寸</option></select><svg><use href="#i-down" /></svg></span>
                  <button class="apply c6">应用</button>
                </form>
              </section>
            </div>
          </div>
        </div>

        <footer class="status"><span class="grip"></span><span>锁定/解锁 Y 轴 [快捷键 Y]</span></footer>
      </section>

      <section class="right">
        <div class="dock objects">
          <div class="dock-main">
            <div class="panel-head lit">
              <span class="grip"></span>
              <div class="menu"><button v-for="m in objectMenu" :key="m">{{ m }}</button></div>
              <div class="icons"><button v-for="i in ['search', 'home', 'eye', 'plus']" :key="i" class="mini" :aria-label="i"><svg><use :href="'#i-' + i" /></svg></button></div>
            </div>
            <div class="tree"><div class="tree-side"></div></div>
          </div>
          <div class="tabs" role="tablist">
            <button role="tab" class="active">对象</button><button role="tab">场次</button><button role="tab">内容浏览器</button><button role="tab">构造</button>
          </div>
        </div>
        <div class="dock attributes">
          <div class="dock-main">
            <div class="panel-head">
              <span class="grip"></span>
              <div class="menu"><button v-for="m in attributeMenu" :key="m">{{ m }}</button></div>
              <div class="icons attr-icons"><button v-for="i in ['back', 'forward', 'up', 'search', 'unlock', 'target', 'plus']" :key="i" class="mini" :class="'a-' + i" :aria-label="i"><svg><use :href="'#i-' + i" /></svg></button></div>
            </div>
          </div>
          <div class="tabs" role="tablist"><button role="tab" class="active">属性</button><button role="tab">层</button></div>
        </div>
      </section>
    </main>
  </div>
</template>

<style>
html, body { margin: 0; background: #474747; }
</style>

<style scoped>
.window, .window * { box-sizing: border-box; }
.window {
  display: flex; flex-direction: column; height: 100vh; min-height: 900px;
  border: 1px solid #1883d7; background: #474747; color: #b4b4b4;
  font: 11px/16px "Noto Sans", "Noto Sans CJK SC", sans-serif; overflow: hidden;
}
button, input, select { font: inherit; color: inherit; border: 0; padding: 0; margin: 0; background: none; border-radius: 0; }
svg { display: block; }
.defs { position: absolute; }
.glyph { font: 900 19px "Open Sans", sans-serif; text-anchor: middle; fill: #171717; stroke: #171717; stroke-width: 1px; }
.small .glyph { font-size: 14px; }
.maxon { font: italic 900 16px Lato, sans-serif; fill: #aaa; stroke: #aaa; stroke-width: 1px; }
.cinema { font: 15px Lato, sans-serif; fill: #a5a5a5; }

.titlebar { display: flex; align-items: center; flex: none; height: 30px; background: #fff; color: #000; }
.app-icon { width: 18px; height: 18px; margin: 0 4px 0 7px; }
.app-title { flex: 1; margin: 0; font: 13px/18px "Noto Sans", "Noto Sans CJK SC", sans-serif; }
.win-btn { width: 46px; height: 30px; display: grid; place-items: center; }
.win-btn svg { width: 10px; height: 10px; overflow: visible; fill: none; stroke: #000; }

.menubar { display: flex; align-items: center; flex: none; height: 28px; padding-left: 8px; padding-bottom: 4px; }
.menu { display: flex; gap: 14px; flex: 1; white-space: nowrap; }
.menu button { line-height: 16px; }
.layout-label { margin-right: 5px; }
.select { position: relative; display: flex; height: 19px; border: 1px solid #333; border-radius: 4px; background: linear-gradient(#646464, #747474); color: #dadada; }
.select select { appearance: none; flex: 1; min-width: 0; padding: 0 6px; opacity: 1; line-height: 16px; }
.select svg { position: absolute; right: 5px; top: 7px; width: 8px; height: 4px; color: #ddd; pointer-events: none; }
.layout-select { width: 128px; }
.mini { width: 16px; height: 16px; }
.mini svg { width: 16px; height: 16px; }
.menubar .mini { margin: 0 1px 0 6px; }

.workspace { flex: 1; min-height: 0; display: grid; grid-template-columns: minmax(0, 1fr) 592px; gap: 3px; }
.left { display: flex; flex-direction: column; min-width: 0; min-height: 0; }
.grip { flex: none; width: 12px; height: 12px; background: linear-gradient(135deg, #b4b4b4 0 34%, #2a2a2a 34% 66%, #565656 66%) 0 0 / 3px 3px; }
.grip-tall { width: 6px; height: 27px; }
.grip-wide { width: 27px; height: 6px; }
.grip-slim { width: 6px; height: 18px; }

.toolbar { display: flex; align-items: center; flex: none; height: 39px; padding: 0 0 3px 0; }
.group { display: flex; border: 1px solid #2d2d2d; border-radius: 4px; background: #6a6a6a; }
.tool { position: relative; width: 36px; height: 34px; border-left: 1px solid #505050; }
.tool:first-child { width: 35px; border-left: 0; border-radius: 3px 0 0 3px; }
.tool:nth-last-of-type(1) { width: 35px; }
.tool:only-of-type { width: 34px; }
.tool svg { width: 36px; height: 36px; margin: -1px 0 0 -1px; }
.tool.on { background: #8ea7d2; }
.tool.more::after { content: ""; position: absolute; right: 1px; bottom: 1px; border: 2px solid transparent; border-right-color: #111; border-bottom-color: #111; }
.tg-0 { margin-left: 2px; }
.tg-1, .tg-3, .tg-4, .create { margin-left: 10px; }
.tg-2 { margin-left: 2px; }
.create { position: relative; }
.annotation { position: absolute; left: -21px; top: -9px; width: 250px; height: 160px; z-index: 5; pointer-events: none; }

.center { flex: 1; min-height: 0; display: flex; gap: 3px; }
.palette { flex: none; width: 36px; display: flex; flex-direction: column; align-items: flex-start; }
.palette .grip { margin: 0 0 2px 5px; }
.vertical { flex-direction: column; }
.vertical .tool, .vertical .tool:first-child, .vertical .tool:only-of-type { width: 34px; height: 36px; border-left: 0; border-top: 1px solid #505050; border-radius: 0; }
.vertical .tool:first-child { height: 35px; border-top: 0; }
.vertical .tool:nth-last-of-type(1) { height: 35px; }
.vertical .tool:only-of-type { height: 34px; }
.pg-1, .pg-3, .pg-4, .pg-5 { margin-top: 10px; }
.pg-2 { margin-top: 2px; }
.maxon-logo { width: 36px; height: 88px; margin-top: auto; margin-bottom: 5px; }

.stage { flex: 1; min-width: 0; display: flex; flex-direction: column; }
.panel-head { display: flex; align-items: center; flex: none; height: 25px; padding-left: 5px; border-bottom: 1px solid #333; }
.panel-head .menu { margin-left: 9px; }
.view-head { height: 24px; padding-left: 6px; border-top: 1px solid #646464; border-bottom: 0; }
.icons { display: flex; gap: 3px; padding-right: 1px; }
.tight { gap: 1px; padding-right: 2px; }
.viewport { position: relative; flex: 1; min-height: 0; margin: 0 1px; border: 1px solid #b9b9b9; background: linear-gradient(#777 0, #787878 10px, #848484 70px, #7d7d7d 200px, #696969 60%, #5a5a5a 100%); overflow: hidden; }
.scene { width: 100%; height: 100%; }
.tag { position: absolute; padding: 0 2px; border-radius: 3px; background: rgb(60 60 60 / 45%); color: #d5d5d5; line-height: 17px; }
.tag-view { left: 2px; top: 3px; }
.tag-grid { right: 2px; bottom: 3px; }
.gizmo { position: absolute; left: 27px; bottom: 22px; width: 40px; height: 52px; }
.gizmo text { font: 11px "Noto Sans", sans-serif; }

.timeline { display: flex; align-items: center; gap: 6px; flex: none; height: 31px; padding-left: 1px; }
.timeline .grip { margin-right: -4px; height: 15px; }
.ruler { flex: 1; min-width: 0; height: 23px; border: 1px solid #272727; border-right-color: #5a5a5a; border-radius: 3px; background: linear-gradient(#313131 0 16px, #282828 16px 17px, #383838 17px); }
.ruler text { font: 11px "Noto Sans", sans-serif; fill: #b8b8b8; }
.ruler .current { fill: #55e08c; }
.num { position: relative; display: flex; flex: none; width: 66px; height: 20px; border: 1px solid #2a2a2a; border-right-color: #5c5c5c; border-bottom-color: #5c5c5c; border-radius: 2px; background: #333; }
.num input { width: 100%; min-width: 0; padding: 0 4px; opacity: 1; }
.num svg { position: absolute; right: 1px; top: 5px; width: 6px; height: 10px; color: #999; }
.transport { display: flex; align-items: center; gap: 10px; flex: none; height: 27px; padding-left: 1px; }
.transport .grip { margin-right: -8px; }
.transport .num input { padding-left: 6px; }
.range { flex: 1; display: flex; align-items: center; gap: 3px; height: 19px; margin: 0 -4px; padding: 0 6px 0 5px; border-radius: 4px; background: linear-gradient(#858585, #646464); box-shadow: 0 0 0 1px #303030; color: #333; }
.range button { font-size: 9px; line-height: 14px; color: #d8d8d8; }
.range-end { margin-left: auto; }
.small .tool { width: 28px; height: 26px; }
.small .tool:first-child { width: 27px; }
.small .tool:nth-last-of-type(1) { width: 27px; }
.small .tool:only-of-type { width: 26px; }
.small .tool svg { width: 28px; height: 28px; }

.managers { flex: none; display: flex; gap: 3px; margin-top: 3px; margin-bottom: 4px; height: 120px; }
.panel { border: 1px solid #333; border-top-color: #646464; border-left-color: #646464; }
.materials { flex: 1; min-width: 0; display: flex; flex-direction: column; }
.material-body { flex: 1; border-top: 1px solid #646464; }
.coords { width: 300px; padding: 0 1px; }
.coord-head { height: 21px; border-bottom: 1px solid #6c6c6c; padding-left: 3px; }
.coord-head span:not(.grip) { width: 93px; padding-left: 8px; color: #999; }
.coord-grid { display: grid; grid-template-columns: 9px minmax(0, 1fr) 9px minmax(0, 1fr) 9px minmax(0, 1fr); gap: 3px; align-items: center; padding: 6px 3px 0 2px; }
.coord-grid .num { width: auto; }
.num.dim { border-color: #3a3a3a #505050 #505050 #3a3a3a; background: #434343; color: #6c6c6c; }
.num.dim svg { color: #6c6c6c; }
.c2 { grid-column: 2; }
.c4 { grid-column: 4; }
.c6 { grid-column: 6; }
.c2, .c4, .c6 { margin-top: 2px; }
.select.dim { background: #595959; border-color: #484848; color: #848484; }
.select.dim svg { color: #808080; }
.apply { height: 19px; border: 1px solid #333; border-radius: 9px; background: linear-gradient(#757575, #616161); color: #dadada; line-height: 16px; }
.status { flex: none; display: flex; align-items: center; gap: 10px; height: 20px; padding-left: 4px; border-top: 1px solid #646464; }

.right { display: flex; flex-direction: column; min-width: 0; gap: 4px; }
.dock { display: flex; min-height: 0; }
.objects { flex: 443 1 0; }
.attributes { flex: 470 1 0; }
.dock-main { flex: 1; min-width: 0; display: flex; flex-direction: column; border: 1px solid #333; border-left-color: #646464; border-top-color: #646464; }
.dock-main .menu { margin-left: 9px; }
.dock-main .panel-head { box-shadow: 0 1px #646464; }
.lit { background: #6b6b6b; }
.attr-icons { gap: 2px; }
.attr-icons .a-up { margin: 0 8px 0 5px; }
.attr-icons .a-forward { margin-left: -2px; }
.attr-icons .a-unlock { margin-left: 5px; }
.tree { flex: 1; display: flex; margin: 2px 1px 0 1px; border-right: 1px solid #646464; border-bottom: 1px solid #646464; border-left: 1px solid #333; }
.tree-side { width: 40px; border-right: 1px solid #646464; }
.tabs { flex: none; width: 24px; padding-top: 1px; display: flex; flex-direction: column; align-items: flex-start; gap: 1px; }
.tabs button { width: 22px; padding: 6px 1px 4px 3px; border-radius: 0 3px 3px 0; background: #343434; color: #747474; writing-mode: vertical-rl; text-orientation: sideways; line-height: 18px; border-bottom: 1px solid #3c3c3c; text-align: start; }
.tabs .active { background: #6d6d6d; color: #ffa51f; }
</style>
